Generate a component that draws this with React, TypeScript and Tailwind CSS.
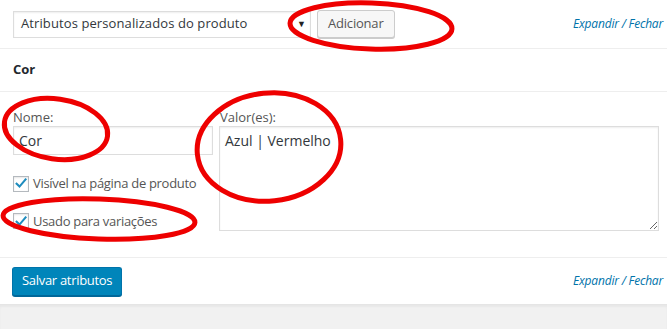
function CheckBox() {
  return (
    <span className="w-4 h-4 border border-[#b4b9be] bg-white shadow-[inset_0_1px_2px_rgba(0,0,0,0.1)] flex items-center justify-center shrink-0">
      <svg viewBox="0 0 16 16" className="w-[15px] h-[15px]">
        <path d="M3 8.2 L6.3 11.5 L13.2 3.4" fill="none" stroke="#1e8cbe" strokeWidth="2.4" strokeLinecap="square" />
      </svg>
    </span>
  );
}

function ExpandClose() {
  return (
    <span className="text-[12px] italic text-[#0073aa] tracking-[-0.2px]">
      Expandir / Fechar
    </span>
  );
}

export default function App() {
  return (
    <div className="relative w-[667px] h-[329px] bg-white overflow-hidden font-['Open_Sans',sans-serif] text-[13px] text-[#444]">
      {/* Toolbar */}
      <div className="h-[49px] border-b border-[#eee] flex items-center pl-[13px] pr-[4px]">
        <div className="w-[298px] h-[27px] border border-[#ddd] bg-white shadow-[inset_0_1px_2px_rgba(0,0,0,0.07)] flex items-center justify-between pl-[7px] pr-[4px] text-[#32373c] text-[13px] tracking-[0.1px]">
          <span>Atributos personalizados do produto</span>
          <span className="text-[9px] text-[#222]">▼</span>
        </div>
        <button className="ml-[6px] h-[28px] px-[10px] border border-[#ccc] bg-[#f7f7f7] rounded-[3px] shadow-[0_1px_0_#ccc] text-[#555] text-[13px] tracking-[-0.2px]">
          Adicionar
        </button>
        <div className="ml-auto">
          <ExpandClose />
        </div>
      </div>

      {/* Attribute header */}
      <div className="h-[43px] border-b border-[#eee] flex items-center px-[13px]">
        <strong className="text-[13px] text-[#23282d] font-bold">Cor</strong>
      </div>

      {/* Attribute body */}
      <div className="h-[166px] border-b border-[#eee] flex gap-[6px] pl-[13px] pt-[17px]">
        <div className="w-[200px] flex flex-col">
          <label className="h-[17px] leading-[17px] text-[#555]">Nome:</label>
          <div className="h-[29px] border border-[#ddd] shadow-[inset_0_1px_2px_rgba(0,0,0,0.07)] flex items-center px-[5px] text-[14px] text-[#32373c]">
            Cor
          </div>
          <div className="mt-[19px] flex items-center gap-[4px] text-[#555] tracking-[-0.3px]">
            <CheckBox />
            <span>Visível na página de produto</span>
          </div>
          <div className="mt-[18px] flex items-center gap-[4px] text-[#555] tracking-[-0.3px]">
            <CheckBox />
            <span>Usado para variações</span>
          </div>
        </div>
        <div className="w-[440px] flex flex-col">
          <label className="h-[17px] leading-[17px] text-[#555] pl-[1px]">Valor(es):</label>
          <textarea
            defaultValue="Azul | Vermelho"
            className="h-[105px] border border-[#ddd] shadow-[inset_0_1px_2px_rgba(0,0,0,0.07)] px-[5px] py-[3px] text-[14px] text-[#32373c] outline-none resize-y"
          />
        </div>
      </div>

      {/* Footer */}
      <div className="h-[46px] flex items-center pl-[12px] pr-[4px]">
        <button className="h-[29px] px-[9px] rounded-[3px] bg-[#0085ba] border border-[#0073aa] border-b-[#006799] shadow-[0_1px_0_#006799] text-white text-[13px] tracking-[-0.3px]">
          Salvar atributos
        </button>
        <div className="ml-auto">
          <ExpandClose />
        </div>
      </div>

      {/* Grey area below */}
      <div className="h-[30px] bg-[#f1f1f1] border-t border-[#e5e5e5] shadow-[inset_0_2px_2px_rgba(0,0,0,0.04)]" />

      {/* Red annotation ellipses */}
      <svg className="absolute inset-0 pointer-events-none" width="667" height="329" viewBox="0 0 667 329">
        <g fill="none" stroke="#ee0000" strokeWidth="5">
          <ellipse cx="371" cy="26" rx="81" ry="23" transform="rotate(2 371 26)" />
          <ellipse cx="56" cy="129" rx="52" ry="30" transform="rotate(8 56 129)" />
          <ellipse cx="269" cy="147" rx="72" ry="54" transform="rotate(-6 269 147)" />
          <ellipse cx="99" cy="219" rx="96" ry="20" transform="rotate(2 99 219)" />
        </g>
      </svg>
    </div>
  );
}
